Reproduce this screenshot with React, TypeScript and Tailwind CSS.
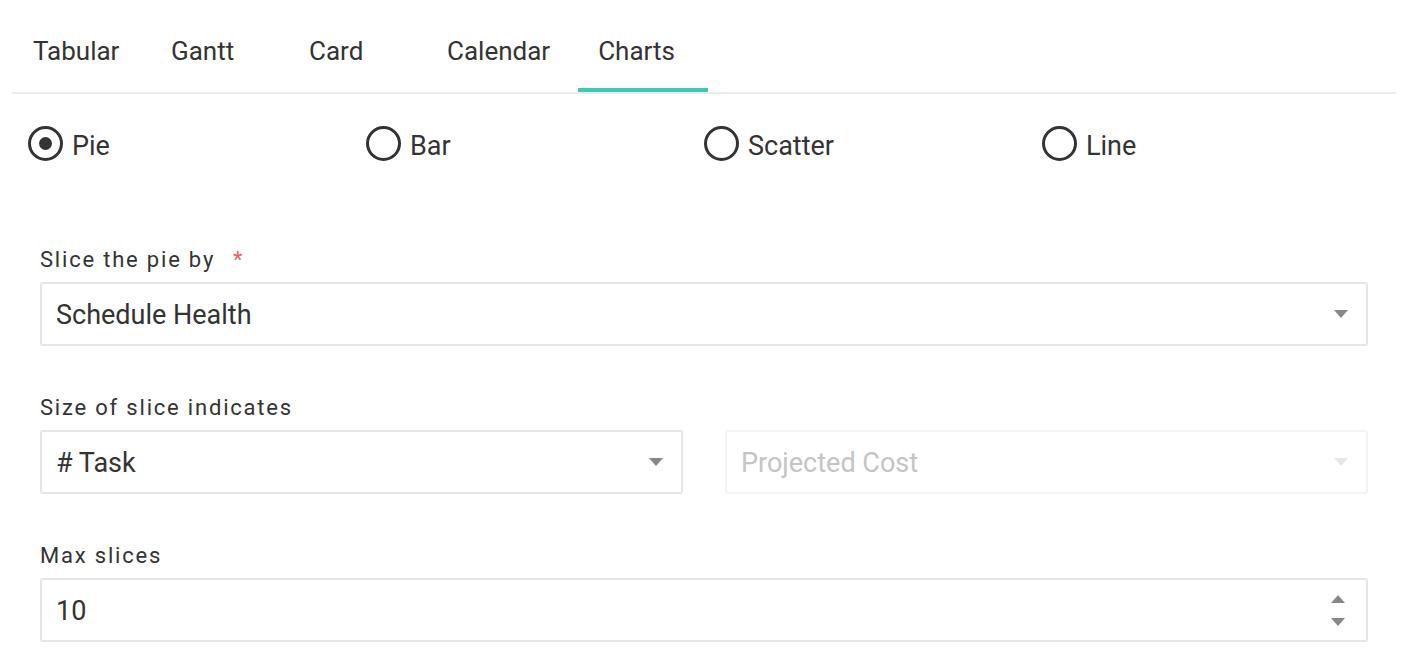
import { useState } from "react";

const tabs = ["Tabular", "Gantt", "Card", "Calendar", "Charts"];
const chartTypes = ["Pie", "Bar", "Scatter", "Line"];

function Caret({ up = false, className = "" }: { up?: boolean; className?: string }) {
  return (
    <svg width="14" height="8" viewBox="0 0 14 8" className={className}>
      <path d={up ? "M0 8 L7 0 L14 8 Z" : "M0 0 L14 0 L7 8 Z"} fill="currentColor" />
    </svg>
  );
}

function Radio({ label, checked, onSelect }: { label: string; checked: boolean; onSelect: () => void }) {
  return (
    <button type="button" onClick={onSelect} className="flex items-center gap-[9px] text-left">
      <span className="grid h-[35px] w-[35px] place-items-center rounded-full border-[3px] border-[#333333]">
        {checked && <span className="h-[13px] w-[13px] rounded-full bg-[#333333]" />}
      </span>
      <span className="pt-[5px] text-[27px] leading-none text-[#333333]">{label}</span>
    </button>
  );
}

function Label({ children, required }: { children: React.ReactNode; required?: boolean }) {
  return (
    <div className="flex h-[30px] items-center text-[22px] tracking-[1.8px] text-[#333333]">
      {children}
      {required && <span className="ml-[18px] text-[22px] text-[#f0605d]">*</span>}
    </div>
  );
}

function Select({ value, disabled }: { value: string; disabled?: boolean }) {
  return (
    <div
      className={
        "flex h-[64px] items-center justify-between rounded-[3px] border-2 pl-[14px] pr-[18px] " +
        (disabled ? "border-[#f3f4f5] text-[#c4c4c4]" : "border-[#e3e7eb] text-[#333333]")
      }
    >
      <span className="pt-[3px] text-[27px]">{value}</span>
      <Caret className={disabled ? "text-[#e6e6e6]" : "text-[#888888]"} />
    </div>
  );
}

export default function App() {
  const [tab, setTab] = useState("Charts");
  const [chart, setChart] = useState("Pie");

  return (
    <div className="min-h-[666px] bg-white pl-[12px] pr-[10px] pt-[12px]" style={{ fontFamily: "Roboto, 'Noto Sans', sans-serif" }}>
      <div className="flex gap-[8px] border-b-2 border-[#ebebeb] pl-[1px]">
        {tabs.map((t) => (
          <button
            key={t}
            type="button"
            onClick={() => setTab(t)}
            className={
              "flex h-[80px] min-w-[130px] items-center border-b-4 px-[20px] pt-[2px] text-[26px] text-[#333333] " +
              (tab === t ? "border-[#3cc8b4]" : "border-transparent")
            }
          >
            {t}
          </button>
        ))}
      </div>

      <div className="mt-[32px] grid grid-cols-4 px-[16px]">
        {chartTypes.map((c) => (
          <Radio key={c} label={c} checked={chart === c} onSelect={() => setChart(c)} />
        ))}
      </div>

      <div className="mt-[83px] px-[28px]">
        <Label required>Slice the pie by</Label>
        <div className="mt-[8px]">
          <Select value="Schedule Health" />
        </div>

        <div className="mt-[46px]">
          <Label>Size of slice indicates</Label>
        </div>
        <div className="mt-[8px] grid grid-cols-2 gap-[42px]">
          <Select value="# Task" />
          <Select value="Projected Cost" disabled />
        </div>

        <div className="mt-[46px]">
          <Label>Max slices</Label>
        </div>
        <div className="mt-[8px] flex h-[64px] items-center justify-between rounded-[3px] border-2 border-[#e3e7eb] pl-[14px] pr-[21px]">
          <span className="pt-[3px] text-[27px] text-[#333333]">10</span>
          <div className="flex flex-col gap-[15px] text-[#888888]">
            <Caret up />
            <Caret />
          </div>
        </div>
      </div>
    </div>
  );
}
